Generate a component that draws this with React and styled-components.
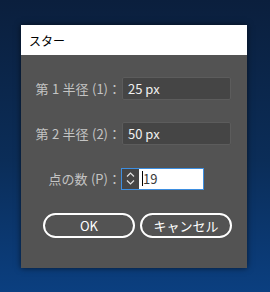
import React from "react";
import styled, { createGlobalStyle } from "styled-components";

const Global = createGlobalStyle`
  html, body { margin: 0; padding: 0; }
  body {
    width: 270px; height: 292px; overflow: hidden;
    background: linear-gradient(180deg, #0b1f3d 0%, #0b2d58 55%, #0b3f80 100%);
    font-family: "Noto Sans CJK JP", "Noto Sans", sans-serif;
  }
`;

const Stage = styled.div`
  padding: 25px 0 0 21px;
`;

const Dialog = styled.div`
  width: 226px;
  height: 243px;
  background: #535353;
  box-shadow: 0 0 6px rgba(0, 0, 0, 0.6);
  display: flex;
  flex-direction: column;
`;

const TitleBar = styled.div`
  height: 30px;
  background: #ffffff;
  display: flex;
  align-items: center;
  padding-left: 8px;
  font-size: 12px;
  color: #000;
`;

const Body = styled.div`
  padding: 22px 0 0 0;
  display: flex;
  flex-direction: column;
  gap: 22px;
`;

const Row = styled.div`
  display: grid;
  grid-template-columns: 100px auto;
  column-gap: 0;
  align-items: center;
  height: 23px;
`;

const Label = styled.span`
  text-align: right;
  color: #c4c4c4;
  font-size: 13px;
  word-spacing: 0.5px;
  white-space: nowrap;
`;

const Field = styled.div`
  box-sizing: border-box;
  margin-left: 1px;
  width: 109px;
  height: 23px;
  background: #454545;
  border: 1px solid #5c5c5c;
  border-radius: 2px;
  display: flex;
  align-items: center;
  padding-left: 5px;
  color: #f0f0f0;
  font-size: 13px;
`;

const Spin = styled.div`
  box-sizing: border-box;
  width: 83px;
  height: 22px;
  border: 1px solid #3d8ee0;
  display: flex;
`;

const Stepper = styled.div`
  width: 17px;
  background: #454545;
  display: flex;
  flex-direction: column;
  align-items: center;
  justify-content: center;
  gap: 3px;
`;

const SpinInput = styled.div`
  flex: 1;
  background: #ffffff;
  display: flex;
  align-items: center;
  padding-left: 3px;
  font-size: 13px;
  color: #3a3a3a;
`;

const Caret = styled.span`
  width: 1px;
  height: 15px;
  background: #000;
`;

const Buttons = styled.div`
  display: flex;
  gap: 5px;
  padding: 23px 0 0 22px;
`;

const Button = styled.div`
  box-sizing: border-box;
  width: 92px;
  height: 25px;
  border: 2px solid #ffffff;
  border-radius: 13px;
  display: flex;
  align-items: center;
  justify-content: center;
  color: #ffffff;
  font-size: 13px;
  font-weight: 400;
`;

const Chevron = ({ up }) => (
  <svg width="9" height="5" viewBox="0 0 9 5">
    <path
      d={up ? "M1 4.5 L4.5 1 L8 4.5" : "M1 0.5 L4.5 4 L8 0.5"}
      fill="none"
      stroke="#e0e0e0"
      strokeWidth="1.2"
    />
  </svg>
);

export default function App() {
  return (
    <>
      <Global />
      <Stage>
        <Dialog>
          <TitleBar>スター</TitleBar>
          <Body>
            <Row>
              <Label>第 1 半径 (1)：</Label>
              <Field>25 px</Field>
            </Row>
            <Row>
              <Label>第 2 半径 (2)：</Label>
              <Field>50 px</Field>
            </Row>
            <Row>
              <Label>点の数 (P)：</Label>
              <Spin>
                <Stepper>
                  <Chevron up />
                  <Chevron />
                </Stepper>
                <SpinInput>
                  <Caret />
                  19
                </SpinInput>
              </Spin>
            </Row>
          </Body>
          <Buttons>
            <Button>OK</Button>
            <Button>キャンセル</Button>
          </Buttons>
        </Dialog>
      </Stage>
    </>
  );
}
